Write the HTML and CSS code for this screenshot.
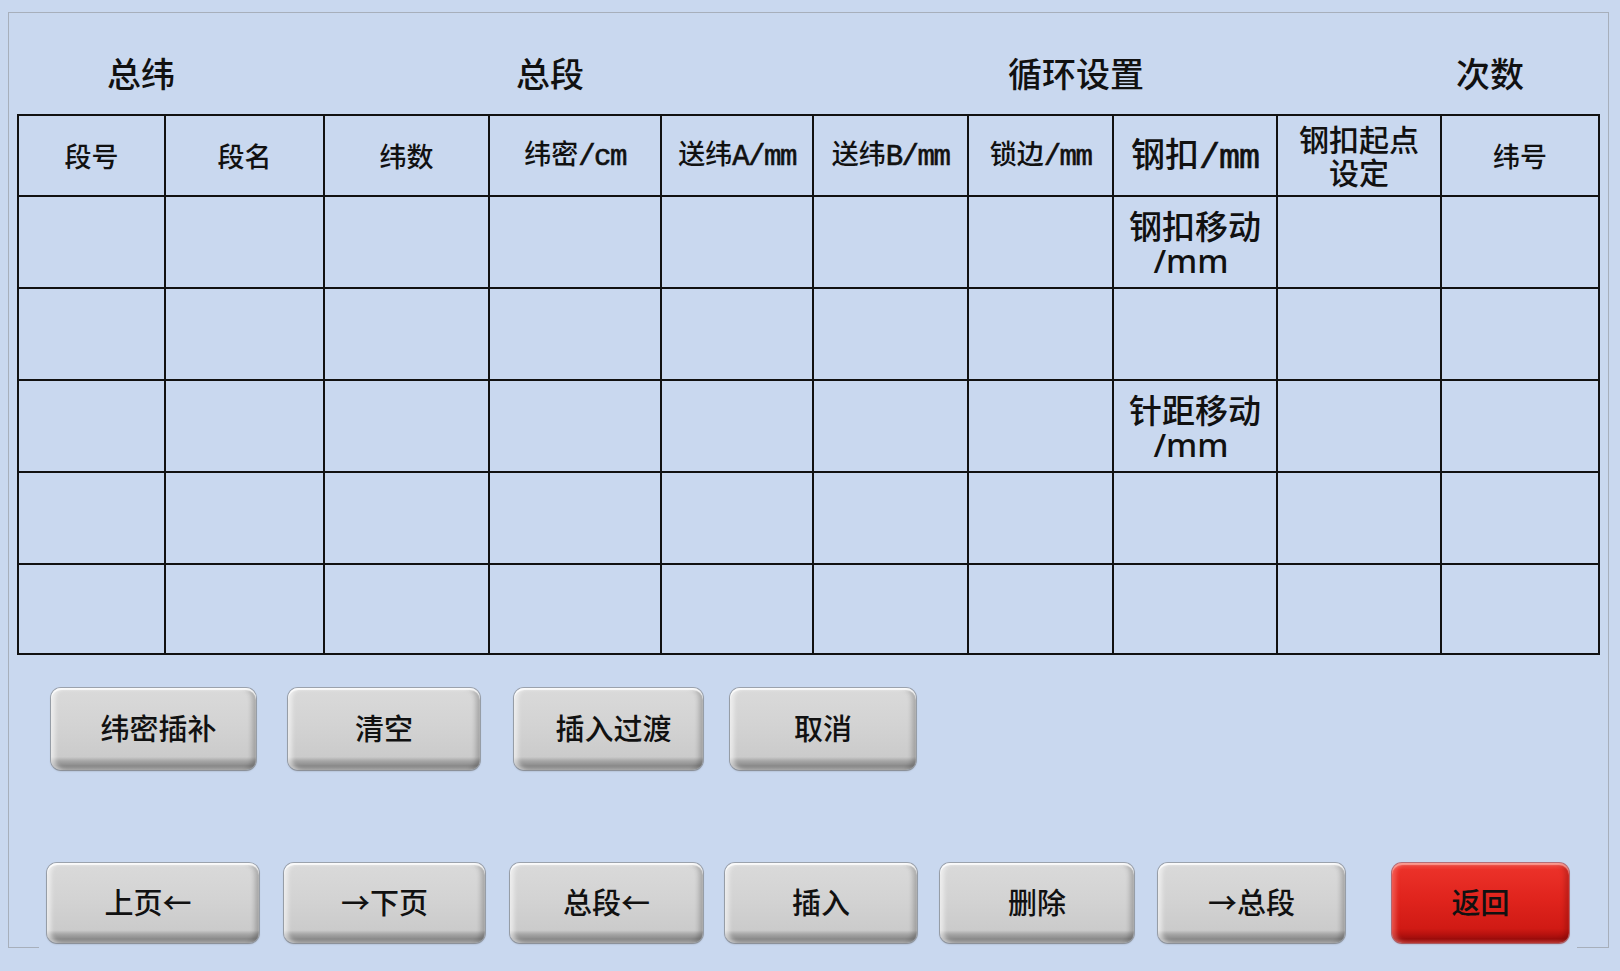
FILE: index.html
```html
<!DOCTYPE html>
<html lang="zh-CN">
<head>
<meta charset="utf-8">
<title>段设置</title>
<link rel="stylesheet" href="styles.css">
</head>
<body>
<div class="frame">
  <div class="titles">
    <div class="title t-wei">总纬</div>
    <div class="title t-duan">总段</div>
    <div class="title t-loop">循环设置</div>
    <div class="title t-count">次数</div>
  </div>

  <div class="grid">
    <div class="cell head">段号</div>
    <div class="cell head">段名</div>
    <div class="cell head">纬数</div>
    <div class="cell head"><span class="hl">纬密<span class="lat">/cm</span></span></div>
    <div class="cell head"><span class="hl">送纬<span class="lat">A/mm</span></span></div>
    <div class="cell head"><span class="hl">送纬<span class="lat">B/mm</span></span></div>
    <div class="cell head"><span class="hl">锁边<span class="lat">/mm</span></span></div>
    <div class="cell head big"><span class="hl">钢扣<span class="lat">/mm</span></span></div>
    <div class="cell head two">钢扣起点<br>设定</div>
    <div class="cell head">纬号</div>

    <div class="cell"></div><div class="cell"></div><div class="cell"></div><div class="cell"></div><div class="cell"></div>
    <div class="cell"></div><div class="cell"></div><div class="cell note"><span class="nl">钢扣移动</span><span class="nl nlat">/mm</span></div><div class="cell"></div><div class="cell"></div>

    <div class="cell"></div><div class="cell"></div><div class="cell"></div><div class="cell"></div><div class="cell"></div>
    <div class="cell"></div><div class="cell"></div><div class="cell"></div><div class="cell"></div><div class="cell"></div>

    <div class="cell"></div><div class="cell"></div><div class="cell"></div><div class="cell"></div><div class="cell"></div>
    <div class="cell"></div><div class="cell"></div><div class="cell note"><span class="nl">针距移动</span><span class="nl nlat">/mm</span></div><div class="cell"></div><div class="cell"></div>

    <div class="cell"></div><div class="cell"></div><div class="cell"></div><div class="cell"></div><div class="cell"></div>
    <div class="cell"></div><div class="cell"></div><div class="cell"></div><div class="cell"></div><div class="cell"></div>

    <div class="cell"></div><div class="cell"></div><div class="cell"></div><div class="cell"></div><div class="cell"></div>
    <div class="cell"></div><div class="cell"></div><div class="cell"></div><div class="cell"></div><div class="cell"></div>
  </div>

  <div class="btn-row row1">
    <div class="btn r1a">纬密插补</div>
    <div class="btn r1b">清空</div>
    <div class="btn r1c">插入过渡</div>
    <div class="btn r1d">取消</div>
  </div>

  <div class="btn-row row2">
    <div class="btn r2a">上页←</div>
    <div class="btn r2b">→下页</div>
    <div class="btn r2c">总段←</div>
    <div class="btn r2d">插入</div>
    <div class="btn r2e">删除</div>
    <div class="btn r2f">→总段</div>
    <div class="btn red r2g">返回</div>
  </div>
</div>
</body>
</html>
```

FILE: styles.css
```css
html, body {
  margin: 0;
  padding: 0;
}

body {
  width: 1620px;
  height: 971px;
  overflow: hidden;
  background: #c9d8ef;
  font-family: "Noto Sans CJK SC", "Noto Sans", sans-serif;
  color: #111;
}

.frame {
  position: relative;
  box-sizing: border-box;
  margin: 12px 0 0 8px;
  width: 1601px;
  height: 936px;
  border: 1px solid #a7afbb;
  border-bottom: none;
}

.frame::before,
.frame::after {
  content: "";
  position: absolute;
  bottom: 0;
  height: 1px;
  background: #a7afbb;
}

.frame::before {
  left: 0;
  width: 30px;
}

.frame::after {
  right: 0;
  width: 31px;
}

/* titles above table */
.titles {
  display: flex;
  height: 101px;
  box-sizing: border-box;
  padding-top: 40px;
}

.title {
  font-size: 34px;
  line-height: 40px;
  font-weight: 500;
  text-align: center;
  box-sizing: border-box;
}

.t-wei { width: 264px; }
.t-duan { width: 554px; }
.t-loop { width: 498px; }
.t-count { width: 274px; padding-left: 56px; }

/* table grid */
.grid {
  display: grid;
  width: fit-content;
  margin-left: 8px;
  grid-template-columns: 145px 157px 163px 170px 150px 153px 143px 162px 162px 156px;
  grid-template-rows: 79px 90px 90px 90px 90px 88px;
  gap: 2px;
  padding: 2px;
  background: #111;
}

.cell {
  background: #c9d8ef;
  display: flex;
  align-items: center;
  justify-content: center;
  text-align: center;
}

.head {
  font-family: "Noto Sans CJK SC", sans-serif;
  font-size: 27px;
  line-height: 30px;
  font-weight: 500;
}

.hl {
  white-space: nowrap;
}

.head .lat {
  font-family: "Liberation Mono", monospace;
  font-size: 29px;
  font-weight: 400;
  letter-spacing: -1.5px;
  vertical-align: -1px;
  -webkit-text-stroke: 0.6px #111;
}

.head.big {
  font-size: 34px;
  line-height: 38px;
}

.head.big .lat {
  font-size: 35px;
  letter-spacing: -1px;
  vertical-align: -1px;
  -webkit-text-stroke: 0.7px #111;
}

.head.two {
  font-size: 30px;
  line-height: 33px;
  padding-bottom: 2px;
}

.note {
  flex-direction: column;
  font-size: 33px;
  font-weight: 500;
  padding-top: 2px;
}

.nl {
  display: block;
  line-height: 36px;
  height: 36px;
}

.nlat {
  font-family: "Noto Sans", sans-serif;
  font-weight: 500;
  font-size: 33px;
  padding-right: 8px;
}

/* buttons */
.btn-row {
  display: flex;
}

.row1 {
  margin-top: 33px;
  padding-left: 42px;
}

.row2 {
  margin-top: 93px;
  padding-left: 38px;
}

.btn {
  box-sizing: border-box;
  display: flex;
  align-items: center;
  justify-content: center;
  font-size: 29px;
  font-weight: 500;
  color: #111;
  border-radius: 10px;
  padding-bottom: 4px;
  background: linear-gradient(180deg,
    #ececec 0%,
    #d9d9d9 6%,
    #d3d3d3 45%,
    #cbcbcb 84%,
    #a6a6a6 89%,
    #8a8a8a 95%,
    #9a9a9a 100%);
  box-shadow:
    inset 0 2px 1px rgba(255, 255, 255, 0.85),
    inset 4px 0 4px rgba(255, 255, 255, 0.55),
    inset -4px 0 5px rgba(0, 0, 0, 0.22),
    0 0 0 1px rgba(120, 120, 120, 0.55),
    0 1px 2px rgba(60, 60, 60, 0.35);
}

.row1 .btn { height: 82px; }
.row2 .btn { height: 80px; }

.btn.red {
  background: linear-gradient(180deg,
    #f4584f 0%,
    #eb3129 8%,
    #e0241d 45%,
    #d01a14 82%,
    #b8120f 89%,
    #9c0d0c 95%,
    #b22a26 100%);
  box-shadow:
    inset 0 2px 1px rgba(255, 170, 160, 0.8),
    inset 4px 0 4px rgba(255, 140, 130, 0.45),
    inset -4px 0 5px rgba(80, 0, 0, 0.25),
    0 0 0 1px rgba(170, 40, 40, 0.6),
    0 1px 2px rgba(80, 20, 20, 0.35);
}

.r1a { width: 205px; padding-left: 10px; }
.r1b { width: 192px; margin-left: 32px; }
.r1c { width: 189px; margin-left: 34px; padding-left: 10px; }
.r1d { width: 186px; margin-left: 27px; }

.r2a { width: 212px; padding-right: 10px; }
.r2b { width: 201px; margin-left: 25px; }
.r2c { width: 193px; margin-left: 25px; }
.r2d { width: 192px; margin-left: 22px; }
.r2e { width: 194px; margin-left: 23px; }
.r2f { width: 187px; margin-left: 24px; }
.r2g { width: 177px; margin-left: 47px; }
```
